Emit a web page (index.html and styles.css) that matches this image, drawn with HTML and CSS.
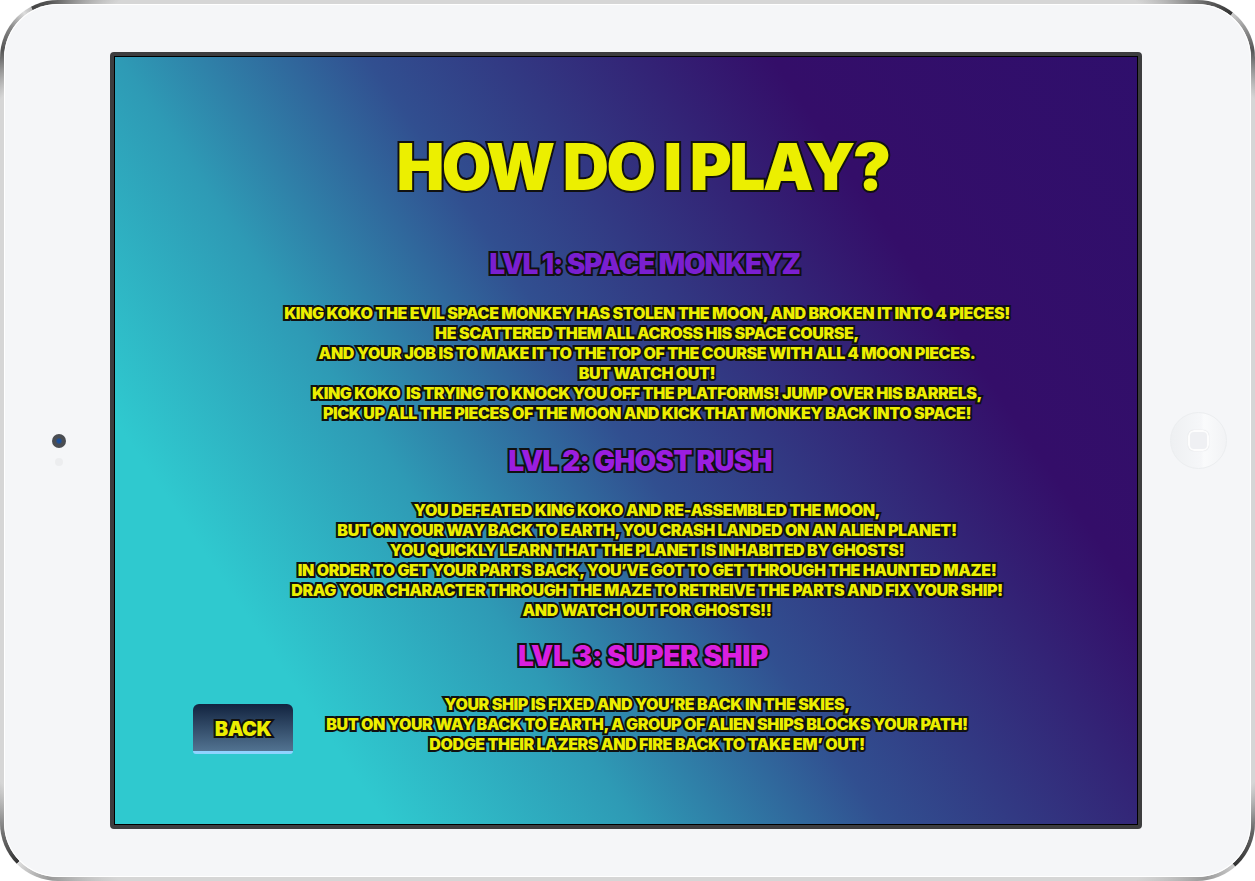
FILE: index.html
```html
<!DOCTYPE html>
<html lang="en-us">
<head>
    <meta charset="utf-8">
    <title>How do I play?</title>
    <link rel="stylesheet" href="styles.css">
</head>
<body>
    <div class="tablet">
        <div class="bezel-left">
            <span class="camera"></span>
            <span class="sensor"></span>
        </div>

        <div class="screen">
            <main class="howto">
                <h1>HOW DO I PLAY?</h1>

                <h2 class="lvl1">LVL 1: SPACE MONKEYZ</h2>
                <p>KING KOKO THE EVIL SPACE MONKEY HAS STOLEN THE MOON, AND BROKEN IT INTO 4 PIECES!<br>
                HE SCATTERED THEM ALL ACROSS HIS SPACE COURSE,<br>
                AND YOUR JOB IS TO MAKE IT TO THE TOP OF THE COURSE WITH ALL 4 MOON PIECES.<br>
                BUT WATCH OUT!<br>
                KING KOKO&nbsp; IS TRYING TO KNOCK YOU OFF THE PLATFORMS! JUMP OVER HIS BARRELS,<br>
                PICK UP ALL THE PIECES OF THE MOON AND KICK THAT MONKEY BACK INTO SPACE!</p>

                <h2 class="lvl2">LVL 2: GHOST RUSH</h2>
                <p>YOU DEFEATED KING KOKO AND RE-ASSEMBLED THE MOON,<br>
                BUT ON YOUR WAY BACK TO EARTH, YOU CRASH LANDED ON AN ALIEN PLANET!<br>
                YOU QUICKLY LEARN THAT THE PLANET IS INHABITED BY GHOSTS!<br>
                IN ORDER TO GET YOUR PARTS BACK, YOU’VE GOT TO GET THROUGH THE HAUNTED MAZE!<br>
                DRAG YOUR CHARACTER THROUGH THE MAZE TO RETREIVE THE PARTS AND FIX YOUR SHIP!<br>
                AND WATCH OUT FOR GHOSTS!!</p>

                <h2 class="lvl3">LVL 3: SUPER SHIP</h2>
                <div class="last-row">
                    <button class="back" type="button">BACK</button>
                    <p>YOUR SHIP IS FIXED AND YOU’RE BACK IN THE SKIES,<br>
                    BUT ON YOUR WAY BACK TO EARTH, A GROUP OF ALIEN SHIPS BLOCKS YOUR PATH!<br>
                    DODGE THEIR LAZERS AND FIRE BACK TO TAKE EM’ OUT!</p>
                </div>
            </main>
        </div>

        <div class="bezel-right">
            <span class="home"><span class="home-square"></span></span>
        </div>
    </div>
</body>
</html>
```

FILE: styles.css
```css
* {
    box-sizing: border-box;
}
html, body {
    height: 100%;
}
body {
    margin: 0;
    background: #fff;
    overflow: hidden;
}

/* metal ring: one conic tile per corner, notch is the hard colour stop */
.tablet {
    width: 1255px;
    height: 881px;
    display: grid;
    grid-template-columns: 106px 1032px 109px;
    align-items: center;
    border: 4px solid transparent;
    border-radius: 58px;
    box-shadow: inset 0 0 0 1px #fff;
    background:
        linear-gradient(#f5f6f8, #f5f6f8) padding-box,
        conic-gradient(at 50px 50px, #555 0, #d6d6d6 55deg, #d6d6d6 225deg, #555 270deg, #888 300deg, #ddd 325deg, #bbb 336deg, #444 337deg, #555 360deg) 0 0 / 130px 130px no-repeat border-box,
        conic-gradient(at 80px 50px, #666 0, #333 36deg, #ccc 37deg, #999 60deg, #555 90deg, #d6d6d6 135deg, #d6d6d6 305deg, #666 360deg) 100% 0 / 130px 130px no-repeat border-box,
        conic-gradient(at 50px 80px, #d6d6d6 0, #d6d6d6 125deg, #999 180deg, #ddd 225deg, #333 226deg, #777 270deg, #d6d6d6 315deg) 0 100% / 130px 130px no-repeat border-box,
        conic-gradient(at 80px 80px, #d6d6d6 0, #d6d6d6 45deg, #666 90deg, #333 139deg, #ccc 140deg, #999 180deg, #d6d6d6 235deg) 100% 100% / 130px 130px no-repeat border-box,
        linear-gradient(#d6d6d6, #d6d6d6) border-box;
}

.bezel-left {
    display: flex;
    flex-direction: column;
    align-items: center;
    gap: 10px;
    padding: 18px 0 0 4px;
}
.camera {
    width: 14px;
    height: 14px;
    border-radius: 50%;
    background: radial-gradient(circle, #1a4f9c 0, #1a4f9c 1.5px, #4a4d52 3.5px);
}
.sensor {
    width: 8px;
    height: 8px;
    border-radius: 50%;
    background: #ecedef;
}

.bezel-right {
    display: flex;
    justify-content: center;
    padding-left: 3px;
}
.home {
    width: 57px;
    height: 57px;
    border-radius: 50%;
    display: flex;
    align-items: center;
    justify-content: center;
    background: linear-gradient(90deg, #eef0f2, #f6f7f9 55%, #fafbfc 60%, #f2f3f5);
    border: 1px solid #eceef0;
}
.home-square {
    width: 21px;
    height: 21px;
    border: 2px solid #fdfdfd;
    border-radius: 6px;
    background: #eff0f3;
    box-shadow: 0 0 1px #cfd2d6;
}

.screen {
    height: 777px;
    border: 4px solid #3d3d3f;
    border-radius: 4px;
    box-shadow: inset 0 0 0 1px #000;
    padding: 1px;
    background: linear-gradient(56deg, #2fc9cf 0, #2fc9cf 18%, #2e9ab5 34%, #314f90 50%, #340e69 76%, #2f0f6c 100%);
    background-origin: border-box;
    font-family: "Inter", "Liberation Sans", sans-serif;
    text-align: center;
}

.howto {
    height: 100%;
    padding: 78px 36px 0 78px;
}

h1 {
    margin: 0;
    padding-right: 9px;
    font-size: 64px;
    line-height: 64px;
    font-weight: 900;
    letter-spacing: -2.6px;
    color: #ecef00;
    -webkit-text-stroke: 4px #111;
    paint-order: stroke fill;
}

h2 {
    margin: 0;
    font-size: 28px;
    line-height: 36px;
    font-weight: 900;
    letter-spacing: -1.2px;
    -webkit-text-stroke: 4px #111;
    paint-order: stroke fill;
}
.lvl1 {
    margin-top: 47px;
    padding-right: 5px;
    color: #7a1fd0;
}
.lvl2 {
    margin-top: 20px;
    padding-right: 14px;
    letter-spacing: -0.8px;
    color: #9a1ee0;
}
.lvl3 {
    margin-top: 18px;
    padding-right: 8px;
    letter-spacing: -0.4px;
    color: #d91fe0;
}

p {
    margin: 21px 0 0;
    font-size: 16px;
    line-height: 20px;
    font-weight: 900;
    letter-spacing: -0.4px;
    color: #ecee00;
    -webkit-text-stroke: 4px #111;
    paint-order: stroke fill;
}

.last-row {
    display: grid;
    grid-template-columns: 1fr auto 1fr;
    align-items: start;
}
.last-row p {
    margin-top: 20px;
}

.back {
    justify-self: start;
    margin-top: 30px;
    padding: 2px 0 0;
    width: 100px;
    height: 50px;
    border: 0;
    border-bottom: 3px solid #8fd3ff;
    border-radius: 6px 6px 3px 3px;
    background: linear-gradient(#12233f, #527391);
    font-family: inherit;
    font-size: 20px;
    font-weight: 900;
    letter-spacing: -0.5px;
    color: #ecee00;
    -webkit-text-stroke: 4px #111;
    paint-order: stroke fill;
}
```
